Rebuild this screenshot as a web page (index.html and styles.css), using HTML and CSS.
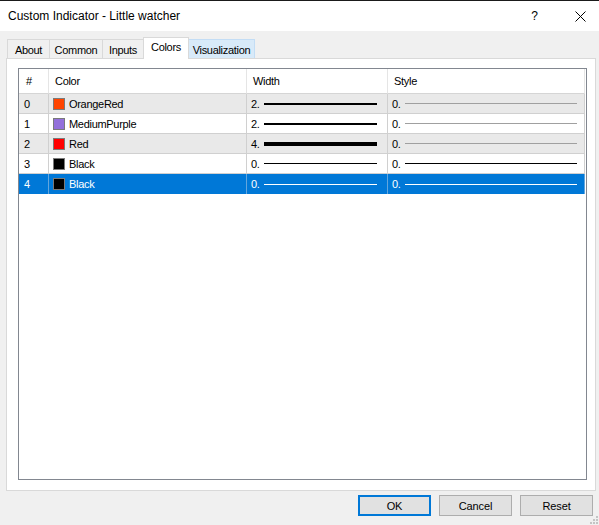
FILE: index.html
```html
<!DOCTYPE html>
<html>
<head>
<meta charset="utf-8">
<link rel="stylesheet" href="styles.css">
</head>
<body>
<div class="window">
  <div class="titlebar">
    <span class="title">Custom Indicator - Little watcher</span>
    <span class="help">?</span>
    <svg class="close" width="11" height="11" viewBox="0 0 11 11"><path d="M0.5 0.5 L10.5 10.5 M10.5 0.5 L0.5 10.5" stroke="#000" stroke-width="1" fill="none"/></svg>
  </div>
  <div class="body">
    <div class="tabs">
      <div class="tab t-about">About</div>
      <div class="tab t-common">Common</div>
      <div class="tab t-inputs">Inputs</div>
      <div class="tab t-colors active">Colors</div>
      <div class="tab t-vis hover">Visualization</div>
    </div>
    <div class="panel">
      <div class="list">
        <div class="grid">
          <div class="hcell c1">#</div>
          <div class="hcell c2">Color</div>
          <div class="hcell c3">Width</div>
          <div class="hcell c4">Style</div>

          <div class="cell c1 alt">0</div>
          <div class="cell c2 alt"><span class="sw sw-orangered"></span>OrangeRed</div>
          <div class="cell c3 alt"><span class="num">2.</span><span class="ln w2 black"></span></div>
          <div class="cell c4 alt"><span class="num">0.</span><span class="ln s gray"></span></div>

          <div class="cell c1">1</div>
          <div class="cell c2"><span class="sw sw-purple"></span>MediumPurple</div>
          <div class="cell c3"><span class="num">2.</span><span class="ln w2 black"></span></div>
          <div class="cell c4"><span class="num">0.</span><span class="ln s gray"></span></div>

          <div class="cell c1 alt">2</div>
          <div class="cell c2 alt"><span class="sw sw-red"></span>Red</div>
          <div class="cell c3 alt"><span class="num">4.</span><span class="ln w4 black"></span></div>
          <div class="cell c4 alt"><span class="num">0.</span><span class="ln s gray"></span></div>

          <div class="cell c1">3</div>
          <div class="cell c2"><span class="sw sw-black"></span>Black</div>
          <div class="cell c3"><span class="num">0.</span><span class="ln w1 black"></span></div>
          <div class="cell c4"><span class="num">0.</span><span class="ln s black"></span></div>

          <div class="cell c1 sel">4</div>
          <div class="cell c2 sel"><span class="sw sw-black"></span>Black</div>
          <div class="cell c3 sel"><span class="num">0.</span><span class="ln w1 white"></span></div>
          <div class="cell c4 sel"><span class="num">0.</span><span class="ln s white"></span></div>
        </div>
      </div>
    </div>
    <div class="buttons">
      <button class="btn default">OK</button>
      <button class="btn">Cancel</button>
      <button class="btn">Reset</button>
    </div>
  </div>
  <svg class="grip" width="8" height="8" viewBox="0 0 8 8">
    <rect x="6" y="0" width="2" height="2" fill="#c4c4c4"/>
    <rect x="3" y="3" width="2" height="2" fill="#c4c4c4"/>
    <rect x="6" y="3" width="2" height="2" fill="#c4c4c4"/>
    <rect x="0" y="6" width="2" height="2" fill="#c4c4c4"/>
    <rect x="3" y="6" width="2" height="2" fill="#c4c4c4"/>
    <rect x="6" y="6" width="2" height="2" fill="#c4c4c4"/>
  </svg>
</div>
</body>
</html>
```

FILE: styles.css
```css
html, body {
  margin: 0;
  padding: 0;
}
body {
  width: 599px;
  height: 525px;
  overflow: hidden;
  background: #f0f0f0;
  font-family: "Liberation Sans", Arial, sans-serif;
  font-size: 11px;
  color: #000;
}
.window {
  position: relative;
  width: 599px;
  height: 525px;
  box-sizing: border-box;
  border-top: 1px solid #1a1a1a;
}
.titlebar {
  height: 30px;
  background: #fff;
  display: flex;
  align-items: center;
  padding-left: 8px;
  padding-right: 13px;
}
.title {
  font-size: 12px;
  flex: 1;
}
.help {
  font-size: 12px;
  margin-right: 37px;
  margin-top: 0px;
}
.close {
  display: block;
}
.body {
  padding-left: 6px;
}
.tabs {
  height: 21px;
  margin-top: 6px;
  display: flex;
  align-items: flex-end;
  padding-left: 1px;
}
.tab {
  box-sizing: border-box;
  height: 19px;
  border: 1px solid #d9d9d9;
  border-bottom: none;
  background: #f0f0f0;
  display: flex;
  align-items: center;
  justify-content: center;
  letter-spacing: -0.3px;
  padding-top: 1px;
  margin-left: -1px;
}
.t-about { width: 43px; margin-left: 0; }
.t-common { width: 54px; }
.t-inputs { width: 42px; }
.t-colors { width: 46px; }
.t-vis { width: 67px; }
.tab.active {
  height: 22px;
  background: #fff;
  margin-bottom: -1px;
  position: relative;
  z-index: 1;
  padding-top: 0;
  padding-bottom: 3px;
}
.tab.hover {
  background: #d8eaf9;
  border-color: #c3ddf5;
  border-left-color: #d9d9d9;
}
.panel {
  width: 590px;
  height: 433px;
  box-sizing: border-box;
  border: 1px solid #d9d9d9;
  background: #fff;
  padding: 9px 8px 10px 11px;
}
.list {
  width: 569px;
  height: 412px;
  box-sizing: border-box;
  border: 1px solid #828790;
  background: #fff;
}
.grid {
  display: grid;
  grid-template-columns: 30px 198px 141px 197px;
  grid-auto-rows: 20px;
  grid-template-rows: 25px;
}
.hcell {
  box-sizing: border-box;
  border-right: 1px solid #e5e5e5;
  border-bottom: 1px solid #d5d5d5;
  display: flex;
  align-items: center;
  letter-spacing: -0.3px;
  padding-bottom: 1px;
}
.hcell.c1 { padding-left: 7px; }
.hcell.c2 { padding-left: 6px; }
.hcell.c3 { padding-left: 6px; }
.hcell.c4 { padding-left: 6px; }
.cell {
  box-sizing: border-box;
  border-right: 1px solid #d0d0d0;
  border-bottom: 1px solid #d0d0d0;
  display: flex;
  align-items: center;
  letter-spacing: -0.3px;
  background: #fff;
}
.cell.alt { background: #e9e9e9; }
.cell.sel {
  background: #0078d7;
  color: #fff;
  border-bottom: none;
  border-right-color: #63a6dd;
}
.cell.c1 { padding-left: 5px; }
.cell.c2 { padding-left: 4px; }
.cell.c3 { padding-left: 4px; padding-right: 10px; }
.cell.c4 { padding-left: 4px; padding-right: 7px; }
.sw {
  width: 12px;
  height: 12px;
  box-sizing: border-box;
  border: 1px solid #7a7a7a;
  margin-right: 4px;
  flex: none;
}
.sw-orangered { background: #ff4500; }
.sw-purple { background: #9370db; }
.sw-red { background: #ff0000; }
.sw-black { background: #000; }
.num { width: 13px; flex: none; }
.ln { flex: 1; display: block; }
.ln.w1 { height: 1px; }
.ln.w2 { height: 2px; }
.ln.w4 { height: 4px; }
.ln.s { height: 1px; }
.ln.black { background: #000; }
.ln.gray { background: #a0a0a0; }
.ln.white { background: #fff; }
.buttons {
  display: flex;
  justify-content: flex-end;
  gap: 8px;
  margin-top: 4px;
  padding-right: 6px;
}
.btn {
  box-sizing: border-box;
  width: 73px;
  height: 21px;
  border: 1px solid #adadad;
  background: #e1e1e1;
  font-family: "Liberation Sans", Arial, sans-serif;
  font-size: 11px;
  letter-spacing: -0.1px;
  color: #000;
  padding: 0;
}
.btn.default {
  border: 2px solid #0078d7;
}
.grip {
  position: absolute;
  right: 1px;
  bottom: 1px;
}
```
